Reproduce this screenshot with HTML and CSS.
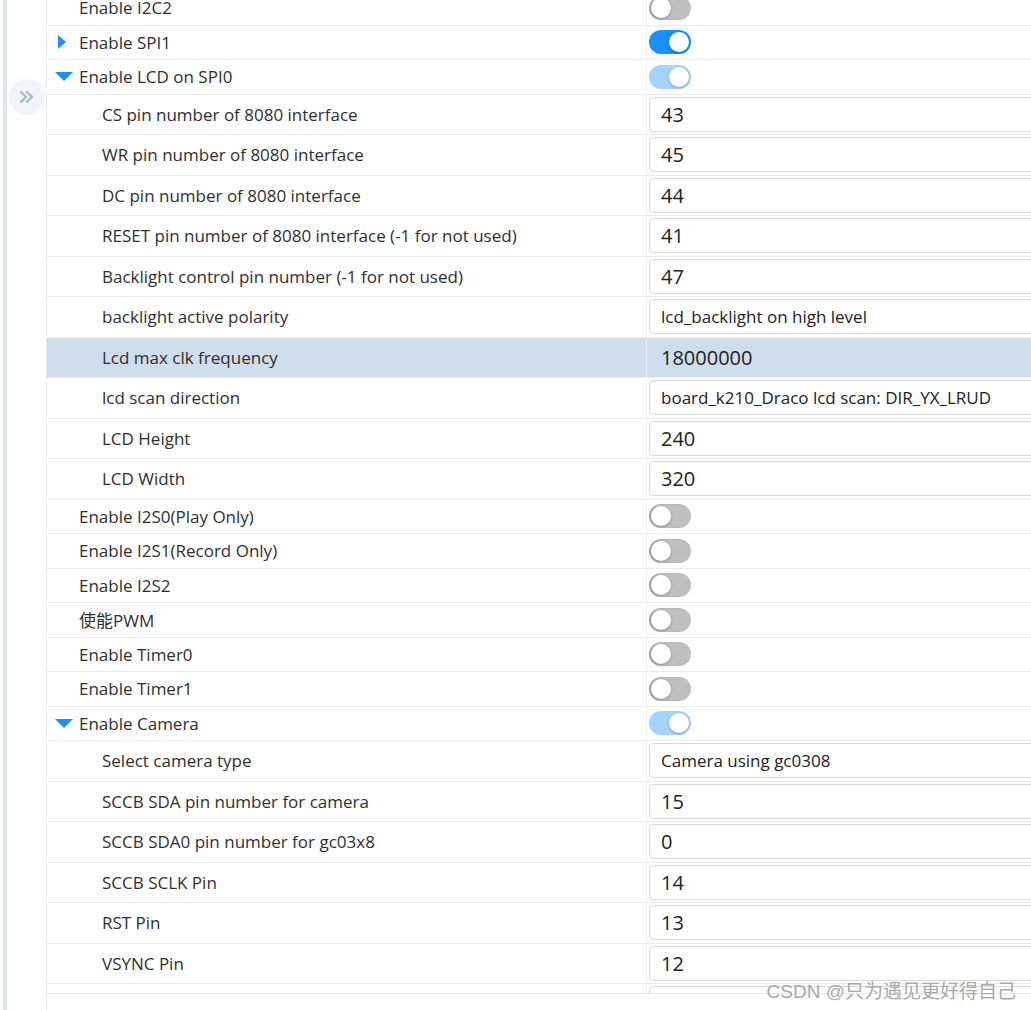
FILE: index.html
```html
<!DOCTYPE html>
<html lang="en">
<head>
<meta charset="utf-8">
<title>Config</title>
<link rel="stylesheet" href="styles.css">
</head>
<body>
<div class="page">
  <aside class="rail">
    <div class="strip"></div>
    <button class="expand" aria-label="expand">
      <svg width="16" height="14" viewBox="0 0 16 14"><path d="M2 2 L7 7 L2 12 M8 2 L13 7 L8 12" fill="none" stroke="#a3bad6" stroke-width="2.4" stroke-linecap="round" stroke-linejoin="round"/></svg>
    </button>
  </aside>
  <main class="table">
    <div class="body">
      <div class="rows">
        <div class="row sw"><div class="label top"><span class="slot"></span>Enable I2C2</div><div class="val"><span class="switch"></span></div></div>
        <div class="row sw"><div class="label top"><span class="slot"><svg width="18" height="14" viewBox="0 0 18 14"><polygon points="3,0 11,7 3,14" fill="#1890ff"/></svg></span>Enable SPI1</div><div class="val"><span class="switch on"></span></div></div>
        <div class="row sw"><div class="label top"><span class="slot"><svg width="18" height="9" viewBox="0 0 18 9"><polygon points="0,0 18,0 9,9" fill="#1890ff"/></svg></span>Enable LCD on SPI0</div><div class="val"><span class="switch on dis"></span></div></div>
        <div class="row in"><div class="label child">CS pin number of 8080 interface</div><div class="val"><div class="box num">43</div></div></div>
        <div class="row in"><div class="label child">WR pin number of 8080 interface</div><div class="val"><div class="box num">45</div></div></div>
        <div class="row in"><div class="label child">DC pin number of 8080 interface</div><div class="val"><div class="box num">44</div></div></div>
        <div class="row in"><div class="label child">RESET pin number of 8080 interface (-1 for not used)</div><div class="val"><div class="box num">41</div></div></div>
        <div class="row in"><div class="label child">Backlight control pin number (-1 for not used)</div><div class="val"><div class="box num">47</div></div></div>
        <div class="row in"><div class="label child">backlight active polarity</div><div class="val"><div class="box sel">lcd_backlight on high level</div></div></div>
        <div class="row in active"><div class="label child">Lcd max clk frequency</div><div class="val"><div class="box num">18000000</div></div></div>
        <div class="row in"><div class="label child">lcd scan direction</div><div class="val"><div class="box sel">board_k210_Draco lcd scan: DIR_YX_LRUD</div></div></div>
        <div class="row in"><div class="label child">LCD Height</div><div class="val"><div class="box num">240</div></div></div>
        <div class="row in"><div class="label child">LCD Width</div><div class="val"><div class="box num">320</div></div></div>
        <div class="row sw"><div class="label top"><span class="slot"></span>Enable I2S0(Play Only)</div><div class="val"><span class="switch"></span></div></div>
        <div class="row sw"><div class="label top"><span class="slot"></span>Enable I2S1(Record Only)</div><div class="val"><span class="switch"></span></div></div>
        <div class="row sw"><div class="label top"><span class="slot"></span>Enable I2S2</div><div class="val"><span class="switch"></span></div></div>
        <div class="row sw"><div class="label top"><span class="slot"></span>使能PWM</div><div class="val"><span class="switch"></span></div></div>
        <div class="row sw"><div class="label top"><span class="slot"></span>Enable Timer0</div><div class="val"><span class="switch"></span></div></div>
        <div class="row sw"><div class="label top"><span class="slot"></span>Enable Timer1</div><div class="val"><span class="switch"></span></div></div>
        <div class="row sw"><div class="label top"><span class="slot"><svg width="18" height="9" viewBox="0 0 18 9"><polygon points="0,0 18,0 9,9" fill="#1890ff"/></svg></span>Enable Camera</div><div class="val"><span class="switch on dis"></span></div></div>
        <div class="row in"><div class="label child">Select camera type</div><div class="val"><div class="box sel">Camera using gc0308</div></div></div>
        <div class="row in"><div class="label child">SCCB SDA pin number for camera</div><div class="val"><div class="box num">15</div></div></div>
        <div class="row in"><div class="label child">SCCB SDA0 pin number for gc03x8</div><div class="val"><div class="box num">0</div></div></div>
        <div class="row in"><div class="label child">SCCB SCLK Pin</div><div class="val"><div class="box num">14</div></div></div>
        <div class="row in"><div class="label child">RST Pin</div><div class="val"><div class="box num">13</div></div></div>
        <div class="row in"><div class="label child">VSYNC Pin</div><div class="val"><div class="box num">12</div></div></div>
        <div class="row in"><div class="label child"></div><div class="val"><div class="box num"></div></div></div>
      </div>
    </div>
  </main>
</div>
<div class="watermark">CSDN @只为遇见更好得自己</div>
</body>
</html>
```
FILE: styles.css
```css
html, body {
  margin: 0;
  padding: 0;
  background: #fff;
  overflow: hidden;
}
body {
  font-family: "Open Sans", "Noto Sans CJK SC", sans-serif;
  color: #2f2f2f;
  height: 1010px;
  position: relative;
}
.page {
  display: flex;
  height: 1010px;
}
.rail {
  width: 46px;
  flex: none;
  display: flex;
  padding-left: 3px;
  box-sizing: border-box;
}
.strip {
  width: 4px;
  background: #dde3f4;
  flex: none;
}
.expand {
  width: 36px;
  height: 36px;
  margin: 79px 0 0 2px;
  border: none;
  border-radius: 50%;
  background: #f1f3f7;
  padding: 0;
  display: flex;
  align-items: center;
  justify-content: center;
}
.table {
  flex: none;
  width: 1100px;
  border-left: 1px solid #ececec;
}
.body {
  height: 993px;
  overflow: hidden;
  border-bottom: 1px solid #e8e8e8;
}
.rows {
  margin-top: -9px;
}
.row {
  display: grid;
  grid-template-columns: 600px 1fr;
  box-sizing: border-box;
  border-bottom: 1px solid #ebebeb;
}
.row.sw { height: 34.5px; }
.row.in { height: 40.5px; }
.row.active { background: #cfdded; }
.label {
  display: flex;
  align-items: center;
  border-right: 1px solid #f0f0f0;
  font-size: 17px;
  white-space: nowrap;
}
.label.top { padding-left: 8px; }
.label.child { padding-left: 55px; }
.slot {
  width: 24px;
  flex: none;
  display: flex;
  align-items: center;
}
.val {
  display: flex;
  align-items: center;
  padding-left: 2px;
}
.switch {
  width: 42px;
  height: 24px;
  border-radius: 12px;
  background: #bfbfbf;
  position: relative;
  box-shadow: inset 2px 0 2px rgba(0,0,0,0.12);
}
.switch::after {
  content: "";
  position: absolute;
  top: 2px;
  left: 2px;
  width: 20px;
  height: 20px;
  border-radius: 50%;
  background: #fff;
  box-shadow: 0 1px 3px rgba(0,0,0,0.25);
}
.switch.on { background: #1890ff; box-shadow: none; }
.switch.on::after { left: 20px; }
.switch.dis { background: #a5d3ff; }
.box {
  width: 500px;
  height: 35px;
  box-sizing: border-box;
  border: 1px solid #d9d9d9;
  border-radius: 4px;
  background: #fff;
  display: flex;
  align-items: center;
  padding-left: 11px;
  white-space: nowrap;
  color: #222;
}
.box.num { font-size: 20px; }
.box.sel { font-size: 17px; }
.active .box { background: transparent; border-color: transparent; }
.watermark {
  position: absolute;
  right: 15px;
  top: 976px;
  font-size: 19px;
  color: #a9a9a9;
  font-family: "Liberation Sans", "Noto Sans CJK SC", sans-serif;
  white-space: nowrap;
}
```
